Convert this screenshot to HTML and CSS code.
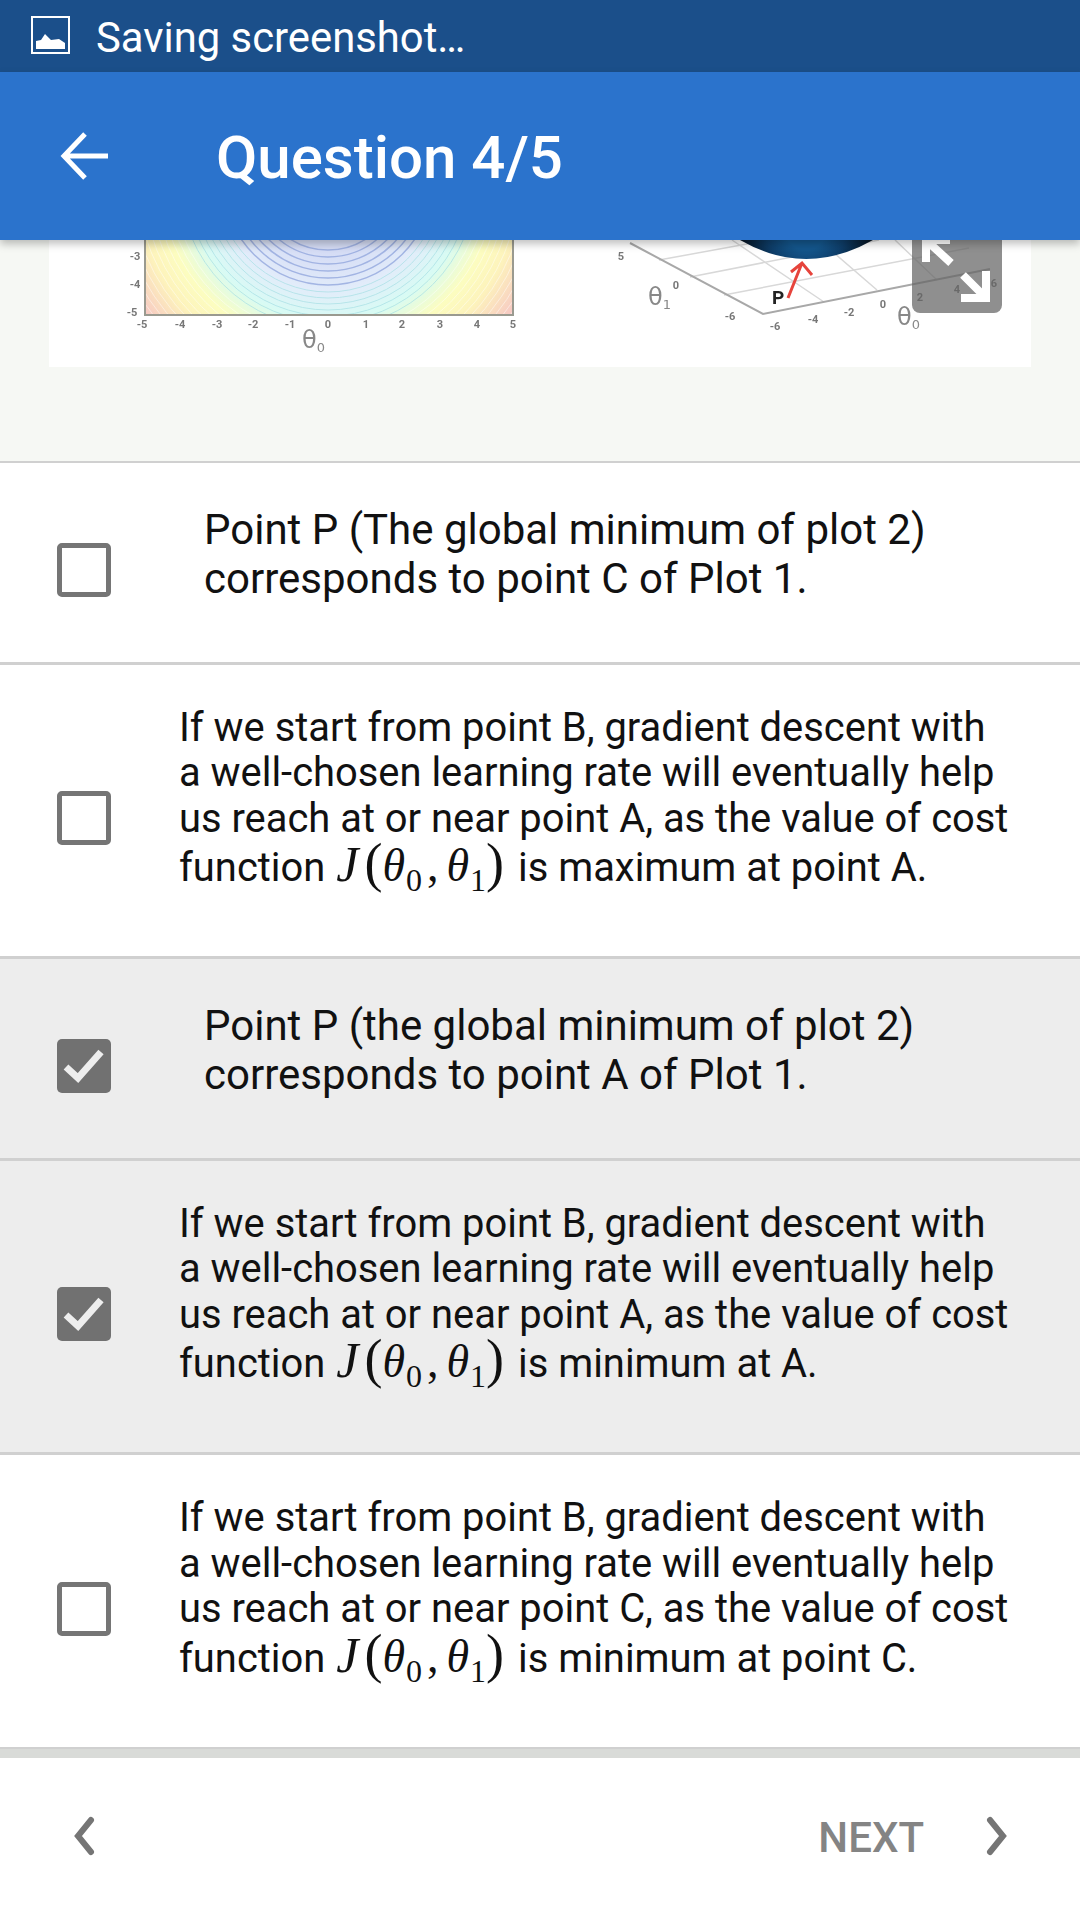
FILE: index.html
```html
<!DOCTYPE html>
<html lang="en">
<head>
    <meta charset="UTF-8">
    <title>Question 4/5</title>
    <link rel="stylesheet" href="styles.css">
</head>
<body>
    <div class="status-bar">
        <svg class="status-icon" viewBox="0 0 40 38" width="40" height="38">
            <rect x="1" y="1" width="37" height="36" fill="none" stroke="#fff" stroke-width="2"/>
            <path d="M5 33 V25 L10 24 L14 18 L20 24 L28 23 L34 27 V33 Z" fill="#fff"/>
        </svg>
        <span>Saving screenshot…</span>
    </div>
    <header class="app-bar">
        <svg class="back-icon" viewBox="0 0 48 48" width="48" height="48">
            <path d="M48 24 H4 M25 2 L4 24 L25 46" fill="none" stroke="#fff" stroke-width="5"/>
        </svg>
        <h1>Question 4/5</h1>
    </header>

    <section class="figure">
        <div class="figure-card">
            <svg class="figure-img" viewBox="0 0 982 127" width="982" height="127">
                <defs>
                    <radialGradient id="contourFill" gradientUnits="userSpaceOnUse" cx="279" cy="-60" r="240">
                        <stop offset="0.3" stop-color="#d5dcf5"/>
                        <stop offset="0.46" stop-color="#e2ecfa"/>
                        <stop offset="0.58" stop-color="#d8fbf4"/>
                        <stop offset="0.7" stop-color="#fcfdc0"/>
                        <stop offset="0.8" stop-color="#fdf3bc"/>
                        <stop offset="0.96" stop-color="#f6c4c4"/>
                    </radialGradient>
                    <radialGradient id="bowlFill" gradientUnits="userSpaceOnUse" cx="757" cy="-10" r="66">
                        <stop offset="0.3" stop-color="#14568c"/>
                        <stop offset="0.6" stop-color="#0e3d68"/>
                        <stop offset="1" stop-color="#04121f"/>
                    </radialGradient>
                    <clipPath id="plotClip">
                        <rect x="96" y="0" width="368" height="75"/>
                    </clipPath>
                </defs>
                <g class="soft">
                    <rect x="96" y="0" width="368" height="75" fill="url(#contourFill)"/>
                    <g clip-path="url(#plotClip)" fill="none">
                        <g stroke="#8fa4dc" stroke-width="1.5" opacity="0.75">
                            <circle cx="279" cy="-60" r="70"/>
                            <circle cx="279" cy="-60" r="77"/>
                            <circle cx="279" cy="-60" r="84"/>
                            <circle cx="279" cy="-60" r="91"/>
                            <circle cx="279" cy="-60" r="98"/>
                            <circle cx="279" cy="-60" r="105"/>
                        </g>
                        <g stroke="#a6dfe4" stroke-width="1" opacity="0.7">
                            <circle cx="279" cy="-60" r="112"/>
                            <circle cx="279" cy="-60" r="118"/>
                            <circle cx="279" cy="-60" r="124"/>
                            <circle cx="279" cy="-60" r="130"/>
                            <circle cx="279" cy="-60" r="136"/>
                            <circle cx="279" cy="-60" r="142"/>
                            <circle cx="279" cy="-60" r="148"/>
                        </g>
                        <g stroke="#fff" stroke-width="1" opacity="0.45">
                            <circle cx="279" cy="-60" r="155"/>
                            <circle cx="279" cy="-60" r="161"/>
                            <circle cx="279" cy="-60" r="167"/>
                            <circle cx="279" cy="-60" r="173"/>
                            <circle cx="279" cy="-60" r="179"/>
                            <circle cx="279" cy="-60" r="185"/>
                            <circle cx="279" cy="-60" r="191"/>
                            <circle cx="279" cy="-60" r="197"/>
                            <circle cx="279" cy="-60" r="203"/>
                            <circle cx="279" cy="-60" r="209"/>
                            <circle cx="279" cy="-60" r="215"/>
                            <circle cx="279" cy="-60" r="221"/>
                            <circle cx="279" cy="-60" r="227"/>
                        </g>
                    </g>
                    <path d="M96 0 V75 H464 V0" fill="none" stroke="#9a9a90" stroke-width="2"/>
                    <g class="tick-label">
                        <text x="86" y="20">-3</text>
                        <text x="86" y="48">-4</text>
                        <text x="83" y="76">-5</text>
                        <text x="93" y="88">-5</text>
                        <text x="131" y="88">-4</text>
                        <text x="168" y="88">-3</text>
                        <text x="204" y="88">-2</text>
                        <text x="241" y="88">-1</text>
                        <text x="279" y="88">0</text>
                        <text x="317" y="88">1</text>
                        <text x="353" y="88">2</text>
                        <text x="391" y="88">3</text>
                        <text x="428" y="88">4</text>
                        <text x="464" y="88">5</text>
                        <text x="572" y="20">5</text>
                        <text x="627" y="49">0</text>
                        <text x="681" y="80">-6</text>
                        <text x="726" y="90">-6</text>
                        <text x="764" y="83">-4</text>
                        <text x="800" y="76">-2</text>
                        <text x="834" y="68">0</text>
                        <text x="871" y="61">2</text>
                        <text x="908" y="53">4</text>
                        <text x="945" y="47">6</text>
                    </g>
                    <text class="axis-label" x="253" y="108">&#952;<tspan class="axis-sub" dy="4">0</tspan></text>
                    <text class="axis-label" x="599" y="65">&#952;<tspan class="axis-sub" dy="4">1</tspan></text>
                    <text class="axis-label" x="848" y="85">&#952;<tspan class="axis-sub" dy="4">0</tspan></text>
                    <g fill="none" stroke="#d8d8d8" stroke-width="1.5">
                        <path d="M610 20 L720 0 M641 37 L830 0 M675 55 L920 8"/>
                        <path d="M683 0 L775 62 M770 0 L828 50 M846 0 L888 40"/>
                    </g>
                    <path d="M581 3 L714 74 L941 29" fill="none" stroke="#a8a8a8" stroke-width="2"/>
                    <path d="M691 0 Q757 38 824 0 Z" fill="url(#bowlFill)"/>
                    <path d="M739 58 L753 23 M742 32 L753 23 L763 35" fill="none" stroke="#e6443c" stroke-width="3"/>
                    <text class="point-label" x="723" y="64">P</text>
                </g>
            </svg>
            <div class="expand-btn">
                <svg viewBox="0 0 90 73" width="90" height="73">
                    <path d="M14 0 V22 M14 0 H38 M14 0 L39 23" stroke="#fff" stroke-width="8" fill="none"/>
                    <path d="M74 31 V58 H49 M74 58 L51 35" stroke="#fff" stroke-width="8" fill="none"/>
                </svg>
            </div>
        </div>
    </section>

    <ul class="answers">
        <li class="answer answer-short">
            <span class="check"></span>
            <p>Point P (The global minimum of plot 2)<br>corresponds to point C of Plot 1.</p>
        </li>
        <li class="answer">
            <span class="check"></span>
            <p>If we start from point B, gradient descent with<br>a well-chosen learning rate will eventually help<br>us reach at or near point A, as the value of cost<br><span class="fn-line">function <span class="math"><i class="fn-j">J</i><span class="paren">(</span><i>&#952;</i><sub>0</sub><span class="comma">,</span><i>&#952;</i><sub>1</sub><span class="paren">)</span></span> is maximum at point A.</span></p>
        </li>
        <li class="answer answer-short selected">
            <span class="check">
                <svg viewBox="0 0 54 54" width="54" height="54"><path d="M9 28 L21 39 L44 13" fill="none" stroke="#eee" stroke-width="7"/></svg>
            </span>
            <p>Point P (the global minimum of plot 2)<br>corresponds to point A of Plot 1.</p>
        </li>
        <li class="answer selected">
            <span class="check">
                <svg viewBox="0 0 54 54" width="54" height="54"><path d="M9 28 L21 39 L44 13" fill="none" stroke="#eee" stroke-width="7"/></svg>
            </span>
            <p>If we start from point B, gradient descent with<br>a well-chosen learning rate will eventually help<br>us reach at or near point A, as the value of cost<br><span class="fn-line">function <span class="math"><i class="fn-j">J</i><span class="paren">(</span><i>&#952;</i><sub>0</sub><span class="comma">,</span><i>&#952;</i><sub>1</sub><span class="paren">)</span></span> is minimum at A.</span></p>
        </li>
        <li class="answer">
            <span class="check"></span>
            <p>If we start from point B, gradient descent with<br>a well-chosen learning rate will eventually help<br>us reach at or near point C, as the value of cost<br><span class="fn-line">function <span class="math"><i class="fn-j">J</i><span class="paren">(</span><i>&#952;</i><sub>0</sub><span class="comma">,</span><i>&#952;</i><sub>1</sub><span class="paren">)</span></span> is minimum at point C.</span></p>
        </li>
    </ul>

    <footer class="nav-bar">
        <svg viewBox="0 0 24 40" width="24" height="40"><path d="M20 4 L7 20 L20 36" fill="none" stroke="#757575" stroke-width="6" stroke-linecap="round"/></svg>
        <div class="next">
            <span class="next-label">NEXT</span>
            <svg viewBox="0 0 24 40" width="24" height="40"><path d="M4 4 L17 20 L4 36" fill="none" stroke="#757575" stroke-width="6" stroke-linecap="round"/></svg>
        </div>
    </footer>
</body>
</html>
```

FILE: styles.css
```css
body {
    margin: 0;
    width: 1080px;
    height: 1920px;
    overflow: hidden;
    background: #fff;
    font-family: Roboto, "Liberation Sans", sans-serif;
    color: #111;
}

.status-bar {
    height: 72px;
    box-sizing: border-box;
    background: #1b4f8a;
    color: #fff;
    display: flex;
    align-items: center;
    padding: 3px 0 0 31px;
    font-size: 41.8px;
}
.status-icon {
    margin-right: 25px;
    margin-top: -6px;
}

.app-bar {
    position: relative;
    z-index: 2;
    height: 168px;
    box-sizing: border-box;
    padding: 2px 0 0 60px;
    background: #2b73cc;
    display: flex;
    align-items: center;
    box-shadow: 0 4px 8px rgba(0, 0, 0, 0.25);
}
.app-bar h1 {
    margin: 0 0 0 108px;
    color: #fff;
    font-size: 60px;
    font-weight: 500;
}
.back-icon {
    margin-top: -2px;
}

.figure {
    height: 221px;
    background: #f6f8f4;
    padding: 0 49px;
}
.figure-card {
    position: relative;
    height: 127px;
    background: #fff;
}
.figure-img {
    display: block;
}
.soft {
    filter: blur(0.6px);
}
.tick-label text {
    font-size: 11px;
    font-weight: 700;
    fill: #777;
    text-anchor: middle;
}
.axis-label {
    font-size: 24px;
    fill: #888;
    font-family: "DejaVu Sans", sans-serif;
}
.axis-sub {
    font-size: 13px;
}
.point-label {
    font-size: 19px;
    font-weight: 700;
    fill: #222;
}
.expand-btn {
    position: absolute;
    left: 863px;
    top: 0;
    width: 90px;
    height: 73px;
    background: rgba(100, 100, 100, 0.72);
    border-radius: 0 0 8px 8px;
    overflow: hidden;
}
.expand-btn svg {
    display: block;
}

.answers {
    list-style: none;
    margin: 0;
    padding: 0;
    border-top: 2px solid #d0d0d0;
}
.answer {
    display: flex;
    align-items: center;
    height: 294.5px;
    padding-left: 57px;
    box-sizing: border-box;
    border-bottom: 3px solid #d0d0d0;
    font-size: 39.9px;
    line-height: 45.5px;
}
.answer-short {
    height: 201.5px;
    font-size: 42px;
}
.answer p {
    margin: -25px 0 0 68px;
}
.answer-short p {
    margin: -16px 0 0 93px;
    line-height: 49px;
}
.selected {
    background: #ededed;
}

.check {
    flex: none;
    box-sizing: border-box;
    width: 54px;
    height: 54px;
    margin-top: 16px;
    border: 5px solid #757575;
    border-radius: 5px;
    background: #fff;
}
.selected .check {
    border: 0;
    background: #717171;
}
.check svg {
    display: block;
}

.fn-line {
    display: inline-block;
    height: 46px;
    line-height: 46px;
}
.math {
    font-family: "Liberation Serif", serif;
    font-size: 46px;
    margin: 0 4px 0 1px;
}
.math i {
    margin-right: 1px;
}
.math .fn-j {
    margin-right: 6px;
    font-size: 50px;
}
.math sub {
    font-size: 32px;
    line-height: 0;
}
.paren {
    display: inline-block;
    height: 30px;
    line-height: 30px;
    font-size: 54px;
    font-weight: 300;
}
.comma {
    margin: 0 8px 0 5px;
}

.nav-bar {
    height: 170px;
    box-sizing: border-box;
    margin-top: -1px;
    border-top: 9px solid #d9dbd8;
    display: flex;
    align-items: center;
    justify-content: space-between;
    padding: 0 70px 4px 71px;
}
.next {
    display: flex;
    align-items: center;
    gap: 62px;
    color: #848484;
    font-size: 42px;
    font-weight: 500;
}
.next-label {
    margin-top: 2px;
}
```
